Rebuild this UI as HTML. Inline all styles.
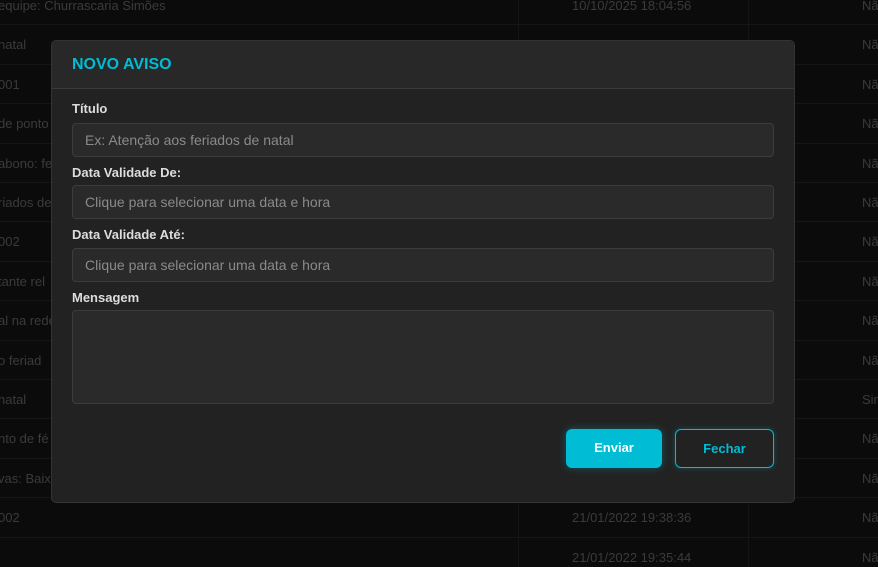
<!DOCTYPE html>
<html><head><meta charset="utf-8"><style>
*{box-sizing:border-box;margin:0;padding:0}
html,body{width:878px;height:567px;overflow:hidden}
body{background:#0b0b0b;font-family:"Liberation Sans",sans-serif;position:relative}
.row{position:absolute;left:0;width:878px;height:39.4px;border-bottom:1px solid #161616;color:#3b3b3b;font-size:13px;line-height:39px}
.row span{position:absolute;white-space:nowrap}
.c1{left:-2px}.c2{left:572px}.c3{left:862px}
.vl{position:absolute;top:0;bottom:0;width:1px;background:#141414}
.modal{position:absolute;left:51px;top:40px;width:744px;height:463px;background:#222;border:1px solid #333;border-radius:5px;overflow:hidden}
.hd{height:48px;background:#282828;border-bottom:1px solid #3a3a3a;padding-left:20px;color:#00bcd4;font-weight:bold;font-size:16px;line-height:47px}
.lbl{position:absolute;left:20px;color:#ddd;font-weight:bold;font-size:13px}
.inp{position:absolute;left:20px;width:702px;height:34px;background:#2a2a2a;border:1px solid #3c3c3c;border-radius:4px;color:#8a8a8a;font-size:14px;line-height:32px;padding-left:12px}
.btn{position:absolute;top:388px;height:39px;border-radius:6px;font-weight:bold;font-size:13px;text-align:center;line-height:38px}
</style></head><body>
<div class="vl" style="left:518px"></div><div class="vl" style="left:748px"></div>
<div class="row" style="top:-14px"><span class="c1">equipe: Churrascaria Simões</span><span class="c2">10/10/2025 18:04:56</span><span class="c3">Não</span></div>
<div class="row" style="top:25.4px"><span class="c1">natal</span><span class="c3">Não</span></div>
<div class="row" style="top:64.8px"><span class="c1">001</span><span class="c3">Não</span></div>
<div class="row" style="top:104.2px"><span class="c1">de ponto</span><span class="c3">Não</span></div>
<div class="row" style="top:143.6px"><span class="c1">abono: fe</span><span class="c3">Não</span></div>
<div class="row" style="top:183px"><span class="c1">riados de</span><span class="c3">Não</span></div>
<div class="row" style="top:222.4px"><span class="c1">002</span><span class="c3">Não</span></div>
<div class="row" style="top:261.8px"><span class="c1">tante rel</span><span class="c3">Não</span></div>
<div class="row" style="top:301.2px"><span class="c1">al na rede</span><span class="c3">Não</span></div>
<div class="row" style="top:340.6px"><span class="c1">o feriad</span><span class="c3">Não</span></div>
<div class="row" style="top:380px"><span class="c1">natal</span><span class="c3">Sim</span></div>
<div class="row" style="top:419.4px"><span class="c1">nto de fé</span><span class="c3">Não</span></div>
<div class="row" style="top:458.8px"><span class="c1">vas: Baix</span><span class="c3">Não</span></div>
<div class="row" style="top:498.2px"><span class="c1">002</span><span class="c2">21/01/2022 19:38:36</span><span class="c3">Não</span></div>
<div class="row" style="top:537.6px"><span class="c2">21/01/2022 19:35:44</span><span class="c3">Não</span></div>
<div class="modal">
<div class="hd">NOVO AVISO</div>
<div class="lbl" style="top:60px">Título</div>
<div class="inp" style="top:82px">Ex: Atenção aos feriados de natal</div>
<div class="lbl" style="top:124px">Data Validade De:</div>
<div class="inp" style="top:144px">Clique para selecionar uma data e hora</div>
<div class="lbl" style="top:186px">Data Validade Até:</div>
<div class="inp" style="top:207px">Clique para selecionar uma data e hora</div>
<div class="lbl" style="top:249px">Mensagem</div>
<div class="inp" style="top:269px;height:94px"></div>
<div class="btn" style="left:514px;width:96px;background:#00bcd4;color:#fff;box-shadow:0 0 8px rgba(0,188,212,.35)">Enviar</div>
<div class="btn" style="left:623px;width:99px;border:1px solid #00bcd4;color:#00bcd4;box-shadow:0 0 6px rgba(0,188,212,.3)">Fechar</div>
</div>
</body></html>
